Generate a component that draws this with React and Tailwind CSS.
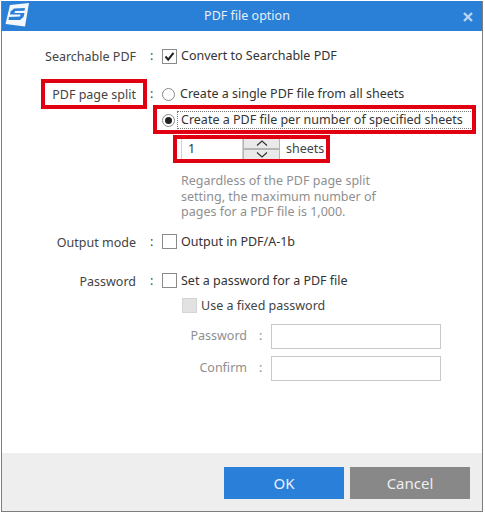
import React from 'react';

const font = { fontFamily: '"Noto Sans", sans-serif' }

// Libellé + deux-points de la colonne de gauche
function Row({ label, className = '', children }) {
  return (
    <div className={`flex items-center ${className}`}>
      <span className="w-[133px] pt-[2px] text-right text-[#444] whitespace-nowrap">{label}</span>
      <span className="w-[26px] pl-[14px] text-[#444]">:</span>
      {children}
    </div>
  )
}

function Box({ checked, disabled }) {
  return (
    <span className={`flex h-[15px] w-[15px] shrink-0 items-center justify-center border ${disabled ? 'border-[#d4d4d4] bg-[#e2e2e2]' : 'border-[#8a8a8a] bg-white'}`}>
      {checked && (
        <svg width="11" height="11" viewBox="0 0 11 11" fill="none">
          <path d="M1.500 5.500 4.200 8.600 9.500 1.800" stroke="#222" strokeWidth="2" />
        </svg>
      )}
    </span>
  )
}

function Radio({ checked }) {
  return (
    <span className="flex h-[13px] w-[13px] shrink-0 items-center justify-center rounded-full border border-[#8a8a8a] bg-white">
      {checked && <span className="h-[7px] w-[7px] rounded-full bg-[#222]" />}
    </span>
  )
}

function Logo() {
  return (
    <svg width="25" height="24" viewBox="0 0 25 24">
      <path d="M5 2 24 0 20 23.500 0.500 21Z" fill="#f4f8fc" />
      <path d="M20 5 9 5.500 5.500 8.500 5 11.500 15.500 11.500 15 13.500 4 14 3.500 17 15 17 18.500 14 19.500 10 9.500 10 10 8 19.500 7.800Z" fill="#2a7fd6" />
    </svg>
  )
}

function PasswordField({ label, className = '' }) {
  return (
    <div className={`flex items-center ${className}`}>
      <span className="w-[84px] text-right text-[#8f8f8f]">{label}</span>
      <span className="w-[24px] pl-[12px] text-[#8f8f8f]">:</span>
      <span className="h-[25px] w-[170px] border border-[#c9c9c9] bg-white" />
    </div>
  )
}

export default function App() {
  return (
    <div style={font} className="relative flex h-[513px] w-[485px] flex-col bg-white pb-[1px] pl-px pr-[2px] pt-px text-[12.5px] leading-[18px]">
      <div className="flex h-full flex-col border-x border-b border-[#7d7d7d]">
        {/* Barre de titre */}
        <div className="relative flex h-[30px] shrink-0 items-center justify-center bg-[#2a7fd6] pl-[10px] text-white">
          <span className="absolute left-[3px] top-[2px]"><Logo /></span>
          <span className="text-[#e6f0fa]">PDF file option</span>
          <svg className="absolute right-[9px] top-[11px]" width="10" height="10" viewBox="0 0 10 10">
            <path d="M1 1 9 9M9 1 1 9" stroke="#b9d5f2" strokeWidth="2.400" />
          </svg>
        </div>

        {/* Formulaire */}
        <div className="flex-1 pl-[1px] pt-[16px]">
          <Row label="Searchable PDF" className="h-[18px]">
            <Box checked />
            <span className="ml-[4px] text-[#333]">Convert to Searchable PDF</span>
          </Row>

          <Row label="PDF page split" className="mt-[20px] h-[18px]">
            <Radio />
            <span className="ml-[5px] text-[#333]">Create a single PDF file from all sheets</span>
          </Row>

          <div className="ml-[159px] mt-[8px] flex h-[18px] items-center">
            <Radio checked />
            <span className="ml-[2px] whitespace-nowrap border border-dotted border-[#777] pl-[3px] pr-[9px] leading-[16px] text-[#333]">Create a PDF file per number of specified sheets</span>
          </div>

          <div className="ml-[178px] mt-[8px] flex h-[24px] items-start">
            <span className="flex h-[24px] w-[62px] items-center border border-[#d0d0d0] pl-[6px] text-[#333]">1</span>
            <div className="flex h-[24px] w-[37px] flex-col">
              <span className="flex h-[12px] items-center justify-center border border-[#b5b5b5] bg-[#e9e9e9]">
                <svg width="12" height="6" viewBox="0 0 12 6" fill="none"><path d="M1 5.500 6 1l5 4.500" stroke="#333" strokeWidth="1.200" /></svg>
              </span>
              <span className="flex h-[12px] items-center justify-center border border-[#b5b5b5] bg-[#e9e9e9]">
                <svg width="12" height="6" viewBox="0 0 12 6" fill="none"><path d="M1 .5 6 5l5-4.500" stroke="#333" strokeWidth="1.200" /></svg>
              </span>
            </div>
            <span className="ml-[6px] self-center text-[#444]">sheets</span>
          </div>

          <p className="ml-[178px] mt-[12px] w-[205px] text-[12.5px] leading-[15.500px] text-[#8f8f8f]">
            Regardless of the PDF page split setting, the maximum number of pages for a PDF file is 1,000.
          </p>

          <Row label="Output mode" className="mt-[13px] h-[18px]">
            <Box />
            <span className="ml-[4px] text-[#333]">Output in PDF/A-1b</span>
          </Row>

          <Row label="Password" className="mt-[21px] h-[18px]">
            <Box />
            <span className="ml-[4px] text-[#333]">Set a password for a PDF file</span>
          </Row>

          <div className="ml-[179px] mt-[7px] flex h-[18px] items-center">
            <Box disabled />
            <span className="ml-[4px] text-[#444]">Use a fixed password</span>
          </div>

          <PasswordField label="Password" className="ml-[160px] mt-[9px]" />
          <PasswordField label="Confirm" className="ml-[160px] mt-[7px]" />
        </div>

        {/* Pied de la boîte */}
        <div className="flex h-[58px] shrink-0 items-start justify-end gap-[6px] bg-[#eeeeee] pr-[12px] pt-[14px] text-[15px]">
          <button className="h-[32px] w-[120px] bg-[#2a7fd9] text-[#e8f1fb]">OK</button>
          <button className="h-[32px] w-[120px] bg-[#888888] text-[#eeeeee]">Cancel</button>
        </div>
      </div>

      {/* Cadres rouges d'annotation */}
      <div className="absolute left-[41px] top-[79px] h-[30px] w-[106px] border-[4px] border-[#e00012]" />
      <div className="absolute left-[153px] top-[105px] h-[29px] w-[323px] border-[4px] border-[#e00012]" />
      <div className="absolute left-[173px] top-[135px] h-[28px] w-[157px] border-[4px] border-[#e00012]" />
    </div>
  )
}
